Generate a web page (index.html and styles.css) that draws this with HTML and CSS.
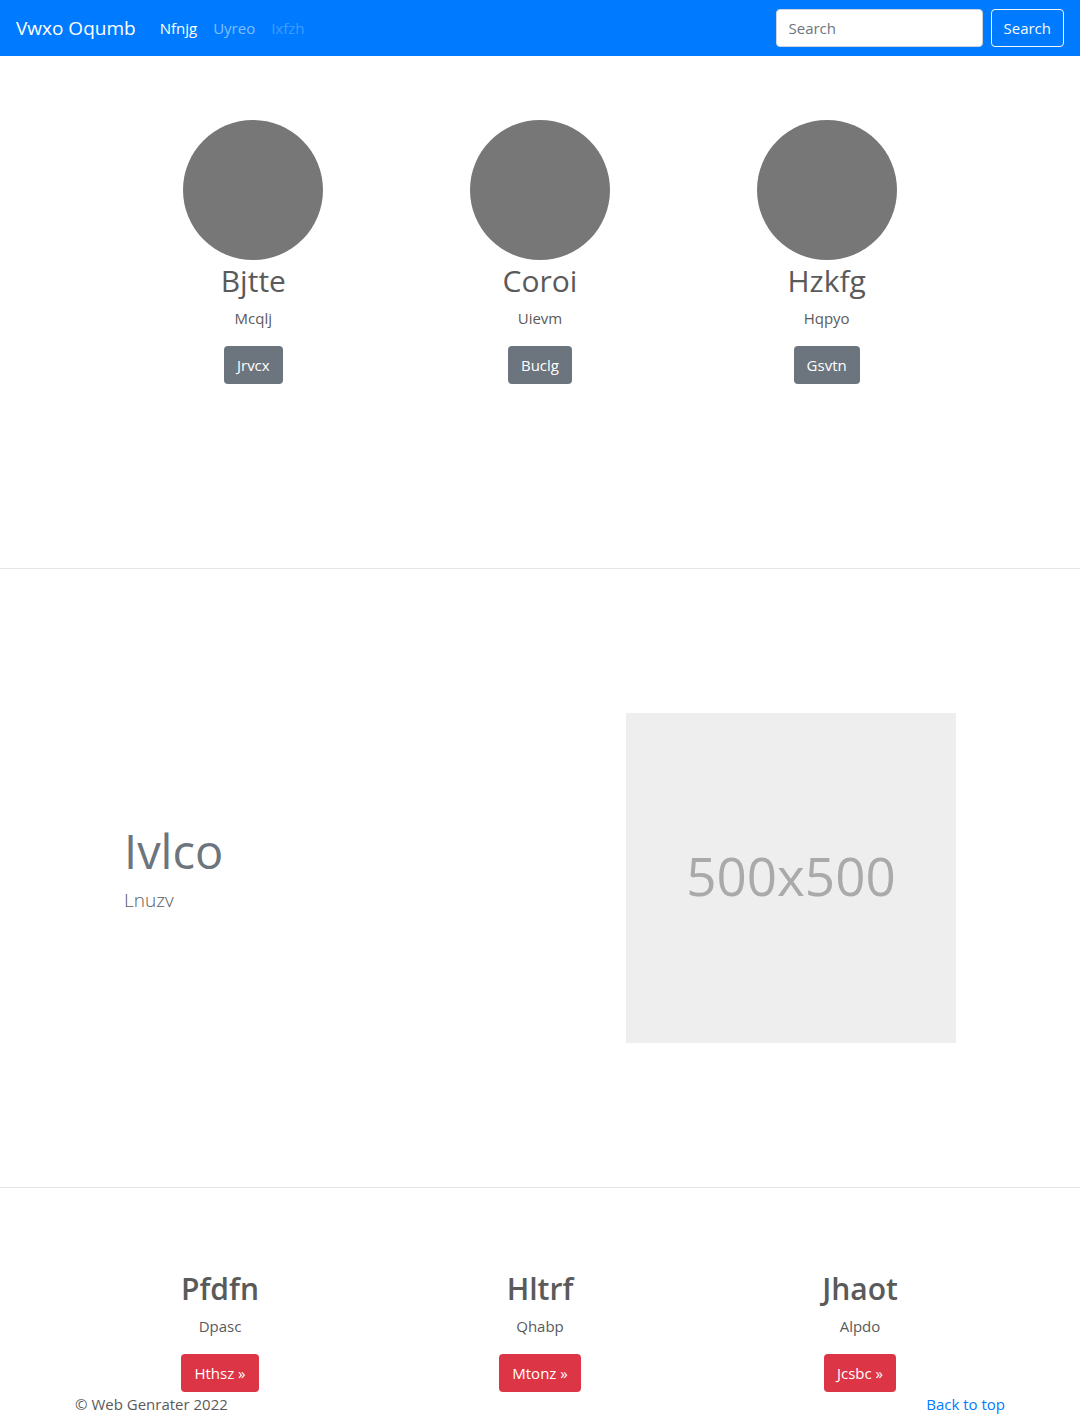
FILE: index.html
```html
<!DOCTYPE html>
<html lang="en">
<head>
<meta charset="utf-8">
<meta name="viewport" content="width=device-width, initial-scale=1">
<title>Vwxo Oqumb</title>
<link rel="stylesheet" href="styles.css">
</head>
<body>
<header class="navbar" id="top">
  <a class="brand" href="#">Vwxo Oqumb</a>
  <nav class="nav">
    <a class="nav-link active" href="#">Nfnjg</a>
    <a class="nav-link" href="#">Uyreo</a>
    <a class="nav-link disabled" href="#" aria-disabled="true">Ixfzh</a>
  </nav>
  <form class="search">
    <input class="search-input" type="text" placeholder="Search" aria-label="Search">
    <button class="btn btn-outline" type="submit">Search</button>
  </form>
</header>
<main>
  <section class="people">
    <article class="person">
      <svg class="avatar" viewBox="0 0 140 140" aria-hidden="true"><circle cx="70" cy="70" r="70" fill="#777"/></svg>
      <h2 class="title">Bjtte</h2>
      <p class="text">Mcqlj</p>
      <button class="btn btn-secondary" type="button">Jrvcx</button>
    </article>
    <article class="person">
      <svg class="avatar" viewBox="0 0 140 140" aria-hidden="true"><circle cx="70" cy="70" r="70" fill="#777"/></svg>
      <h2 class="title">Coroi</h2>
      <p class="text">Uievm</p>
      <button class="btn btn-secondary" type="button">Buclg</button>
    </article>
    <article class="person">
      <svg class="avatar" viewBox="0 0 140 140" aria-hidden="true"><circle cx="70" cy="70" r="70" fill="#777"/></svg>
      <h2 class="title">Hzkfg</h2>
      <p class="text">Hqpyo</p>
      <button class="btn btn-secondary" type="button">Gsvtn</button>
    </article>
  </section>
  <hr class="divider">
  <section class="feature">
    <div class="feature-copy">
      <h2 class="feature-title">Ivlco</h2>
      <p class="lead">Lnuzv</p>
    </div>
    <div class="placeholder">500x500</div>
  </section>
  <hr class="divider">
  <section class="cards">
    <article class="card">
      <h2 class="title title-bold">Pfdfn</h2>
      <p class="text">Dpasc</p>
      <button class="btn btn-danger" type="button">Hthsz »</button>
    </article>
    <article class="card">
      <h2 class="title title-bold">Hltrf</h2>
      <p class="text">Qhabp</p>
      <button class="btn btn-danger" type="button">Mtonz »</button>
    </article>
    <article class="card">
      <h2 class="title title-bold">Jhaot</h2>
      <p class="text">Alpdo</p>
      <button class="btn btn-danger" type="button">Jcsbc »</button>
    </article>
  </section>
</main>
<footer class="footer">
  <span>© Web Genrater 2022</span>
  <a class="top-link" href="#top">Back to top</a>
</footer>
</body>
</html>
```
FILE: styles.css
```css
* { box-sizing: border-box; }

body {
  margin: 0;
  background: #fff;
  color: #5a5a5a;
  font: 400 15px/24px "Open Sans", "Noto Sans", sans-serif;
}

h2, p { margin: 0; }
a { color: #007bff; text-decoration: none; }

.navbar {
  display: flex;
  align-items: center;
  min-height: 56px;
  padding: 0 16px;
  background: #007bff;
}

.brand { margin-right: 16px; color: #fff; font-size: 19px; line-height: 30px; }
.nav { display: flex; flex: 1; }
.nav-link { padding: 8px; color: rgba(255, 255, 255, .5); }
.nav-link.active { color: #fff; }
.nav-link.disabled { color: rgba(255, 255, 255, .25); }

.search { display: flex; gap: 8px; }
.search-input {
  width: 207px;
  height: 38px;
  padding: 6px 12px;
  border: 1px solid #ced4da;
  border-radius: 4px;
  font: inherit;
  color: #495057;
}
.search-input::placeholder { color: #6c757d; opacity: 1; }

.btn {
  height: 38px;
  padding: 6px 12px;
  border: 1px solid transparent;
  border-radius: 4px;
  color: #fff;
  font: inherit;
}
.btn-outline { border-color: #f8f9fa; background: transparent; color: #f8f9fa; }
.btn-secondary { background: #6c757d; }
.btn-danger { background: #dc3545; }

.people {
  display: grid;
  grid-template-columns: repeat(3, 1fr);
  max-width: 860px;
  margin: 0 auto;
  padding: 64px 0 184px;
  text-align: center;
}
.avatar { display: block; width: 140px; height: 140px; margin: 0 auto; }
.title { margin-bottom: 4px; font-size: 30px; font-weight: 400; line-height: 42px; }
.title-bold { font-weight: 600; }
.text { margin-bottom: 16px; }

.divider { margin: 0; border: 0; border-top: 1px solid #e5e5e5; }

.feature {
  display: flex;
  align-items: center;
  justify-content: space-between;
  max-width: 832px;
  margin: 0 auto;
  padding: 144px 0;
}
.feature-title { margin-bottom: 4px; color: #6c757d; font-size: 47px; font-weight: 400; line-height: 60px; }
.lead { margin-bottom: 20px; font-size: 19px; font-weight: 300; line-height: 30px; }
.placeholder {
  display: grid;
  place-items: center;
  width: 330px;
  aspect-ratio: 1;
  padding-bottom: 4px;
  background: #eee;
  color: #aaa;
  font-size: 53px;
  line-height: 64px;
}

.cards {
  display: grid;
  grid-template-columns: repeat(3, 1fr);
  max-width: 960px;
  margin: 0 auto;
  padding-top: 80px;
  text-align: center;
}

.footer {
  display: flex;
  justify-content: space-between;
  max-width: 930px;
  margin: 0 auto;
}
```
